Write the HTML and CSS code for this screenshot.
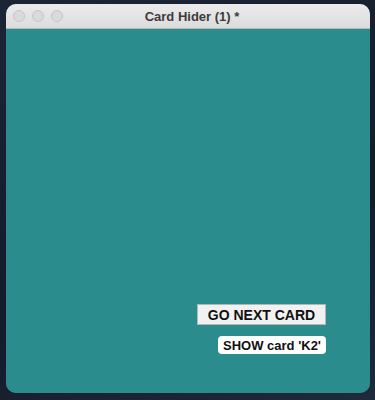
FILE: index.html
```html
<!DOCTYPE html>
<html>
<head>
<meta charset="utf-8">
<link rel="stylesheet" href="styles.css">
</head>
<body>
<div class="desktop">
  <div class="window">
    <div class="titlebar">
      <div class="lights">
        <span class="light"></span>
        <span class="light"></span>
        <span class="light"></span>
      </div>
      <div class="title">Card Hider (1) *</div>
    </div>
    <div class="content">
      <div class="controls">
        <button class="next">GO NEXT CARD</button>
        <button class="show">SHOW card 'K2'</button>
      </div>
    </div>
  </div>
</div>
</body>
</html>
```
FILE: styles.css
```css
html, body {
  margin: 0;
  padding: 0;
  width: 375px;
  height: 400px;
  overflow: hidden;
}
.desktop {
  width: 375px;
  height: 400px;
  box-sizing: border-box;
  padding: 4px 5px 7px 6px;
  background: linear-gradient(160deg, #1c2536 0%, #141b29 60%, #1f2a3d 100%);
}
.window {
  height: 100%;
  display: flex;
  flex-direction: column;
  border-radius: 10px;
  overflow: hidden;
  background: #2a8c8c;
}
.titlebar {
  height: 24px;
  flex: none;
  position: relative;
  display: flex;
  align-items: center;
  justify-content: center;
  background: linear-gradient(#ebebeb, #dcdcdc);
  border-bottom: 1px solid #b8b8b8;
}
.lights {
  position: absolute;
  left: 7px;
  top: 6px;
  display: flex;
  gap: 7px;
}
.light {
  width: 12px;
  height: 12px;
  border-radius: 50%;
  background: #dadada;
  border: 1px solid #c4c4c4;
  box-sizing: border-box;
}
.title {
  font-family: "Liberation Sans", Arial, sans-serif;
  font-weight: bold;
  font-size: 13px;
  color: #3c3c3c;
  margin-left: 8px;
}
.content {
  flex: 1;
  display: flex;
  justify-content: flex-end;
  align-items: flex-end;
  padding: 0 44px 39px 0;
  background: #2a8c8c;
}
.controls {
  display: flex;
  flex-direction: column;
  align-items: flex-end;
  gap: 11px;
}
button {
  font-family: "Liberation Sans", Arial, sans-serif;
  font-weight: bold;
  color: #111;
  margin: 0;
}
.next {
  width: 129px;
  height: 21px;
  padding: 0;
  font-size: 14px;
  background: #f1f1f1;
  border: 1px solid #b5b5b5;
  border-radius: 0;
}
.show {
  width: 108px;
  height: 18px;
  padding: 0;
  font-size: 13px;
  background: #ffffff;
  border: none;
  border-radius: 4px;
}
```
